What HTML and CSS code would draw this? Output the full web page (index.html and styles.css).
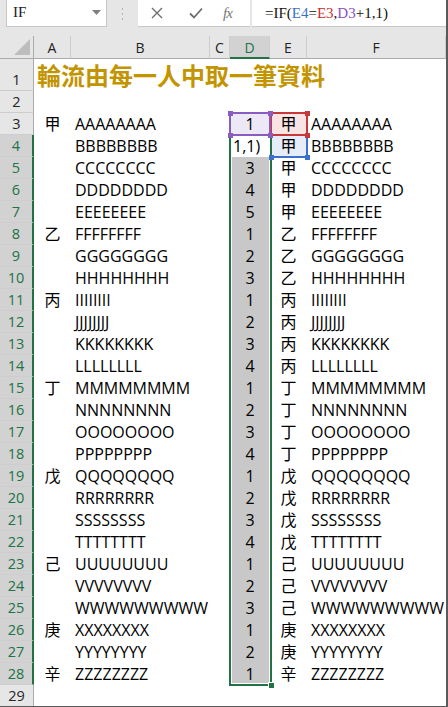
FILE: index.html
```html
<!DOCTYPE html>
<html lang="zh-Hant">
<head>
<meta charset="utf-8">
<title>Sheet</title>
<link rel="stylesheet" href="styles.css">
</head>
<body>
<div class="app">
  <div class="fbar">
    <div class="namebox"><span class="nb-text">IF</span><svg class="nb-arrow" width="9" height="5" viewBox="0 0 9 5"><polygon points="0,0 9,0 4.5,5" fill="#808080"/></svg></div>
    <div class="grip"><svg width="3" height="14" viewBox="0 0 3 14"><rect x="1" y="1" width="1" height="2" fill="#b4b4b4"/><rect x="1" y="6" width="1" height="2" fill="#b4b4b4"/><rect x="1" y="11" width="1" height="2" fill="#b4b4b4"/></svg></div>
    <div class="btns">
      <svg class="ico ico-x" width="12" height="12" viewBox="0 0 12 12"><path d="M1 1 L11 11 M11 1 L1 11" stroke="#6e6e6e" stroke-width="1.4" fill="none"/></svg>
      <svg class="ico ico-ok" width="14" height="12" viewBox="0 0 14 12"><path d="M1 6.5 L5 10.5 L13 1.5" stroke="#6e6e6e" stroke-width="1.8" fill="none"/></svg>
      <span class="fx">fx</span>
    </div>
    <div class="finput">=IF(<span class="rb">E4</span>=<span class="rr">E3</span>,<span class="rp">D3</span>+1,1)</div>
  </div>

  <div class="sheet">
    <div class="corner"><svg width="16" height="16" viewBox="0 0 16 16"><polygon points="16,0 16,16 0,16" fill="#bdbdbd"/></svg></div>
    <div class="ch">A</div><div class="ch">B</div><div class="ch">C</div><div class="ch chs">D</div><div class="ch">E</div><div class="ch">F</div>

    <div class="rh">1</div><div class="c title">輪流由每一人中取一筆資料</div><div class="c"></div><div class="c"></div><div class="c"></div><div class="c"></div><div class="c"></div>
    <div class="rh">2</div><div class="c"></div><div class="c"></div><div class="c"></div><div class="c"></div><div class="c"></div><div class="c"></div>
    <div class="rh">3</div><div class="c ca">甲</div><div class="c cb">AAAAAAAA</div><div class="c"></div><div class="c cd hp">1</div><div class="c ce hr">甲</div><div class="c cf">AAAAAAAA</div>
    <div class="rh s">4</div><div class="c ca"></div><div class="c cb">BBBBBBBB</div><div class="c"></div><div class="c cd edit">1,1)</div><div class="c ce hb">甲</div><div class="c cf">BBBBBBBB</div>
    <div class="rh s">5</div><div class="c ca"></div><div class="c cb">CCCCCCCC</div><div class="c"></div><div class="c cd g">3</div><div class="c ce">甲</div><div class="c cf">CCCCCCCC</div>
    <div class="rh s">6</div><div class="c ca"></div><div class="c cb">DDDDDDDD</div><div class="c"></div><div class="c cd g">4</div><div class="c ce">甲</div><div class="c cf">DDDDDDDD</div>
    <div class="rh s">7</div><div class="c ca"></div><div class="c cb">EEEEEEEE</div><div class="c"></div><div class="c cd g">5</div><div class="c ce">甲</div><div class="c cf">EEEEEEEE</div>
    <div class="rh s">8</div><div class="c ca">乙</div><div class="c cb">FFFFFFFF</div><div class="c"></div><div class="c cd g">1</div><div class="c ce">乙</div><div class="c cf">FFFFFFFF</div>
    <div class="rh s">9</div><div class="c ca"></div><div class="c cb">GGGGGGGG</div><div class="c"></div><div class="c cd g">2</div><div class="c ce">乙</div><div class="c cf">GGGGGGGG</div>
    <div class="rh s">10</div><div class="c ca"></div><div class="c cb">HHHHHHHH</div><div class="c"></div><div class="c cd g">3</div><div class="c ce">乙</div><div class="c cf">HHHHHHHH</div>
    <div class="rh s">11</div><div class="c ca">丙</div><div class="c cb">IIIIIIII</div><div class="c"></div><div class="c cd g">1</div><div class="c ce">丙</div><div class="c cf">IIIIIIII</div>
    <div class="rh s">12</div><div class="c ca"></div><div class="c cb">JJJJJJJJ</div><div class="c"></div><div class="c cd g">2</div><div class="c ce">丙</div><div class="c cf">JJJJJJJJ</div>
    <div class="rh s">13</div><div class="c ca"></div><div class="c cb">KKKKKKKK</div><div class="c"></div><div class="c cd g">3</div><div class="c ce">丙</div><div class="c cf">KKKKKKKK</div>
    <div class="rh s">14</div><div class="c ca"></div><div class="c cb">LLLLLLLL</div><div class="c"></div><div class="c cd g">4</div><div class="c ce">丙</div><div class="c cf">LLLLLLLL</div>
    <div class="rh s">15</div><div class="c ca">丁</div><div class="c cb">MMMMMMMM</div><div class="c"></div><div class="c cd g">1</div><div class="c ce">丁</div><div class="c cf">MMMMMMMM</div>
    <div class="rh s">16</div><div class="c ca"></div><div class="c cb">NNNNNNNN</div><div class="c"></div><div class="c cd g">2</div><div class="c ce">丁</div><div class="c cf">NNNNNNNN</div>
    <div class="rh s">17</div><div class="c ca"></div><div class="c cb">OOOOOOOO</div><div class="c"></div><div class="c cd g">3</div><div class="c ce">丁</div><div class="c cf">OOOOOOOO</div>
    <div class="rh s">18</div><div class="c ca"></div><div class="c cb">PPPPPPPP</div><div class="c"></div><div class="c cd g">4</div><div class="c ce">丁</div><div class="c cf">PPPPPPPP</div>
    <div class="rh s">19</div><div class="c ca">戊</div><div class="c cb">QQQQQQQQ</div><div class="c"></div><div class="c cd g">1</div><div class="c ce">戊</div><div class="c cf">QQQQQQQQ</div>
    <div class="rh s">20</div><div class="c ca"></div><div class="c cb">RRRRRRRR</div><div class="c"></div><div class="c cd g">2</div><div class="c ce">戊</div><div class="c cf">RRRRRRRR</div>
    <div class="rh s">21</div><div class="c ca"></div><div class="c cb">SSSSSSSS</div><div class="c"></div><div class="c cd g">3</div><div class="c ce">戊</div><div class="c cf">SSSSSSSS</div>
    <div class="rh s">22</div><div class="c ca"></div><div class="c cb">TTTTTTTT</div><div class="c"></div><div class="c cd g">4</div><div class="c ce">戊</div><div class="c cf">TTTTTTTT</div>
    <div class="rh s">23</div><div class="c ca">己</div><div class="c cb">UUUUUUUU</div><div class="c"></div><div class="c cd g">1</div><div class="c ce">己</div><div class="c cf">UUUUUUUU</div>
    <div class="rh s">24</div><div class="c ca"></div><div class="c cb">VVVVVVVV</div><div class="c"></div><div class="c cd g">2</div><div class="c ce">己</div><div class="c cf">VVVVVVVV</div>
    <div class="rh s">25</div><div class="c ca"></div><div class="c cb">WWWWWWWWW</div><div class="c"></div><div class="c cd g">3</div><div class="c ce">己</div><div class="c cf">WWWWWWWWW</div>
    <div class="rh s">26</div><div class="c ca">庚</div><div class="c cb">XXXXXXXX</div><div class="c"></div><div class="c cd g">1</div><div class="c ce">庚</div><div class="c cf">XXXXXXXX</div>
    <div class="rh s">27</div><div class="c ca"></div><div class="c cb">YYYYYYYY</div><div class="c"></div><div class="c cd g">2</div><div class="c ce">庚</div><div class="c cf">YYYYYYYY</div>
    <div class="rh s">28</div><div class="c ca">辛</div><div class="c cb">ZZZZZZZZ</div><div class="c"></div><div class="c cd g">1</div><div class="c ce">辛</div><div class="c cf">ZZZZZZZZ</div>
    <div class="rh">29</div><div class="c"></div><div class="c"></div><div class="c"></div><div class="c"></div><div class="c"></div><div class="c"></div>

    <div class="ref ref-blue"><i class="k bl kb"></i><i class="k br kb"></i></div>
    <div class="range"><i class="handle"></i></div>
    <div class="ref ref-red"><i class="k tr kr"></i><i class="k br kr"></i></div>
    <div class="ref ref-purple"><i class="k tl kp"></i><i class="k tr kp"></i><i class="k bl kp"></i><i class="k br kp"></i></div>
  </div>
</div>
</body>
</html>
```

FILE: styles.css
```css
* { box-sizing: border-box; margin: 0; padding: 0; }
html, body { margin: 0; background: #fff; }
body { width: 448px; height: 707px; overflow: hidden; }

.app {
  width: 448px;
  height: 707px;
  background: #e6e6e6;
  border-right: 2px solid #595959;
  border-bottom: 1px solid #595959;
  display: flex;
  flex-direction: column;
  overflow: hidden;
}

/* formula bar */
.fbar {
  height: 36px;
  flex: none;
  display: flex;
  align-items: flex-start;
  padding-left: 6px;
}
.namebox {
  width: 101px;
  height: 27px;
  background: #fff;
  border: 1px solid #c6c6c6;
  border-top: none;
  display: flex;
  align-items: center;
  justify-content: space-between;
  padding: 0 5px 1px 6px;
  font-family: "Liberation Serif", serif;
  font-size: 15px;
  color: #222;
}
.nb-arrow { margin-top: -1px; }
.grip {
  width: 31px;
  height: 27px;
  display: flex;
  align-items: center;
  justify-content: center;
}
.btns {
  width: 112px;
  height: 27px;
  background: #fff;
  border-bottom: 1px solid #c6c6c6;
  display: flex;
  align-items: center;
  padding-left: 13px;
}
.ico-ok { margin-left: 26px; }
.fx {
  margin-left: 20px;
  font-family: "Liberation Serif", serif;
  font-style: italic;
  font-size: 15px;
  color: #777;
  letter-spacing: -1px;
}
.finput {
  flex: 1;
  height: 27px;
  margin-left: 2px;
  background: #fff;
  border-bottom: 1px solid #c6c6c6;
  padding-left: 13px;
  font-family: "Liberation Serif", serif;
  font-size: 15px;
  line-height: 27px;
  color: #111;
  white-space: nowrap;
}
.rb { color: #3b6fc9; }
.rr { color: #c9302c; }
.rp { color: #8a4fc1; }

/* sheet */
.sheet {
  position: relative;
  flex: none;
  display: grid;
  grid-template-columns: 34px 37px 139px 20px 40px 37px 139px;
  grid-template-rows: 23px 32px repeat(28, 22px);
  background: #fff;
}
.corner {
  background: #e6e6e6;
  border-right: 1px solid #ababab;
  border-bottom: 1px solid #ababab;
  display: flex;
  align-items: flex-end;
  justify-content: flex-end;
  padding: 0 3px 3px 0;
}
.ch {
  background: #e6e6e6;
  border-right: 1px solid #cdcdcd;
  border-bottom: 1px solid #ababab;
  display: flex;
  align-items: center;
  justify-content: center;
  font-family: "Open Sans", "Noto Sans", sans-serif;
  font-size: 14px;
  color: #222;
  padding-top: 1px;
}
.ch.chs {
  background: #d2d2d2;
  color: #217346;
  border-bottom: 2px solid #217346;
}
.rh {
  background: #e6e6e6;
  border-right: 1px solid #ababab;
  border-bottom: 1px solid #cdcdcd;
  display: flex;
  align-items: flex-end;
  justify-content: center;
  font-family: "Open Sans", "Noto Sans", sans-serif;
  font-size: 14.5px;
  line-height: 20px;
  color: #262626;
}
.rh.s {
  background: #d2d2d2;
  color: #217346;
  border-right: 2px solid #217346;
}

.c {
  font-family: "Open Sans", "Noto Sans CJK TC", sans-serif;
  font-size: 16px;
  line-height: 22px;
  color: #000;
  white-space: nowrap;
  overflow: visible;
}
.ca, .cd, .ce { text-align: center; }
.cb, .cf { padding-left: 4px; }
.title {
  font-family: "Noto Sans CJK TC", sans-serif;
  font-weight: bold;
  font-size: 24px;
  line-height: 32px;
  color: #c29400;
  padding-left: 3px;
  position: relative;
  z-index: 1;
}
.hp { background: #ede8f5; }
.hr { background: #f9e4e3; }
.hb { background: #e6edf8; }
.g { background: #c8c8c8; }
.edit { text-align: left; padding-left: 3px; background: #fff; }

/* reference boxes and selection */
.ref, .range {
  position: absolute;
  pointer-events: none;
}
.ref { border: 2px solid; }
.ref-purple { left: 229px; top: 76px; width: 42px; height: 24px; border-color: #8a5cc2; }
.ref-red { left: 270px; top: 76px; width: 38px; height: 24px; border-color: #c6393a; }
.ref-blue { left: 270px; top: 98px; width: 38px; height: 24px; border-color: #3d6fcb; }
.range {
  left: 229px;
  top: 98px;
  width: 43px;
  height: 552px;
  border: 2px solid #217346;
  box-shadow: inset 0 0 0 1px #fff;
}
.handle {
  position: absolute;
  right: -5px;
  bottom: -5px;
  width: 7px;
  height: 7px;
  background: #217346;
  border: 1px solid #fff;
}
.k {
  position: absolute;
  width: 5px;
  height: 5px;
  z-index: 5;
}
.kp { background: #8a5cc2; z-index: 6; }
.kr { background: #c6393a; }
.kb { background: #3d6fcb; }
.tl { left: -3.5px; top: -3.5px; }
.tr { right: -3.5px; top: -3.5px; }
.bl { left: -3.5px; bottom: -3.5px; }
.br { right: -3.5px; bottom: -3.5px; }
```
